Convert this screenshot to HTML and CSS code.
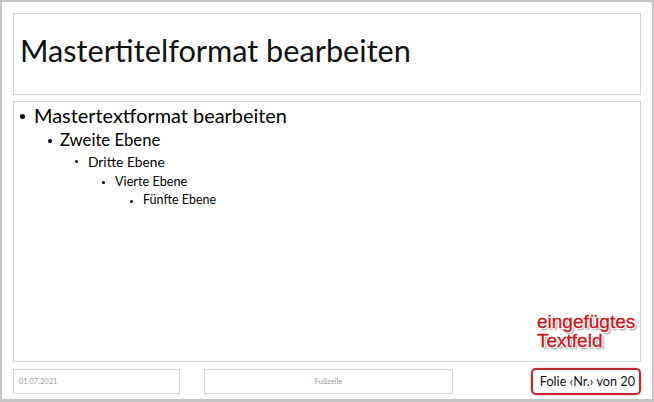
FILE: index.html
```html
<!DOCTYPE html>
<html lang="de">
<head>
<meta charset="utf-8">
<title>Folienmaster</title>
<link rel="stylesheet" href="styles.css">
</head>
<body>
<div class="frame">
  <div class="slide">
    <div class="title-box">
      <h1 class="title">Mastertitelformat bearbeiten</h1>
    </div>
    <div class="body-box">
      <ul class="lvl lvl1">
        <li>Mastertextformat bearbeiten
          <ul class="lvl lvl2">
            <li>Zweite Ebene
              <ul class="lvl lvl3">
                <li>Dritte Ebene
                  <ul class="lvl lvl4">
                    <li>Vierte Ebene
                      <ul class="lvl lvl5">
                        <li>Fünfte Ebene</li>
                      </ul>
                    </li>
                  </ul>
                </li>
              </ul>
            </li>
          </ul>
        </li>
      </ul>
      <div class="note">eingefügtes<br>Textfeld</div>
    </div>
    <div class="footer">
      <div class="ph date">01.07.2021</div>
      <div class="ph foot">Fußzeile</div>
      <div class="num">Folie ‹Nr.› von 20</div>
    </div>
  </div>
</div>
</body>
</html>
```
FILE: styles.css
```css
html, body {
  margin: 0;
  padding: 0;
}
body {
  width: 654px;
  height: 402px;
  font-family: Lato, "Noto Sans", sans-serif;
  color: #000;
}
.frame {
  box-sizing: border-box;
  width: 654px;
  height: 402px;
  border: 2px solid #c4c4c4;
  border-bottom-width: 3px;
  background: #fff;
}
.slide {
  box-sizing: border-box;
  height: 100%;
  padding: 11px 11px 2px 11px;
  display: flex;
  flex-direction: column;
  gap: 6px;
}
.title-box {
  box-sizing: border-box;
  height: 82px;
  border: 1px solid #d6d6d6;
  display: flex;
  align-items: center;
  padding: 0 0 5px 6px;
}
.title {
  margin: 0;
  font-weight: 400;
  font-size: 30.7px;
  line-height: 1;
  color: #111;
}
.body-box {
  box-sizing: border-box;
  height: 261px;
  border: 1px solid #d6d6d6;
  position: relative;
  padding: 0 0 0 6px;
}
.lvl {
  list-style: none;
  margin: 0;
  padding: 0;
}
.lvl li {
  position: relative;
}
.lvl li::before {
  content: "";
  position: absolute;
  left: 0;
  border-radius: 50%;
  background: #000;
}
.lvl1 > li {
  font-size: 19.9px;
  line-height: 27px;
  padding-left: 14px;
}
.lvl1 > li::before {
  top: 12px;
  width: 5px;
  height: 5px;
}
.lvl2 { margin-left: 14px; }
.lvl2 > li {
  font-size: 16.7px;
  line-height: 22px;
  padding-left: 12px;
}
.lvl2 > li::before {
  top: 10px;
  width: 4px;
  height: 4px;
}
.lvl3 { margin-left: 15px; }
.lvl3 > li {
  font-size: 13.8px;
  line-height: 21px;
  padding-left: 13px;
}
.lvl3 > li::before,
.lvl4 > li::before,
.lvl5 > li::before {
  top: 9px;
  width: 3px;
  height: 3px;
}
.lvl4 { margin-left: 14px; }
.lvl4 > li {
  font-size: 12.7px;
  line-height: 19px;
  padding-left: 13px;
}
.lvl5 { margin-left: 15px; }
.lvl5 > li {
  font-size: 12.5px;
  line-height: 18px;
  padding-left: 13px;
}
.note {
  position: absolute;
  left: 523px;
  top: 210px;
  font-family: "Liberation Sans", Arial, sans-serif;
  font-size: 19px;
  line-height: 19px;
  color: #c8161d;
  -webkit-text-stroke: 0.3px #c8161d;
  text-shadow: 1px 1px 0 #fff, -1px -1px 0 #fff, 1px -1px 0 #fff, -1px 1px 0 #fff, 2px 2px 2px rgba(0,0,0,0.5);
}
.footer {
  display: flex;
  align-items: center;
  height: 26px;
}
.ph {
  box-sizing: border-box;
  height: 25px;
  border: 1px solid #d6d6d6;
  font-size: 7.5px;
  color: #9a9a9a;
  display: flex;
  align-items: center;
}
.date {
  width: 167px;
  padding-left: 5px;
}
.foot {
  width: 249px;
  margin-left: 24px;
  justify-content: center;
}
.num {
  box-sizing: border-box;
  margin-left: auto;
  width: 110px;
  height: 27px;
  border: 2px solid #c0262c;
  border-radius: 5px;
  box-shadow: 0 0 2px rgba(192,38,44,0.5);
  font-size: 12.7px;
  display: flex;
  align-items: center;
  justify-content: flex-end;
  padding-right: 4px;
  color: #111;
}
```
